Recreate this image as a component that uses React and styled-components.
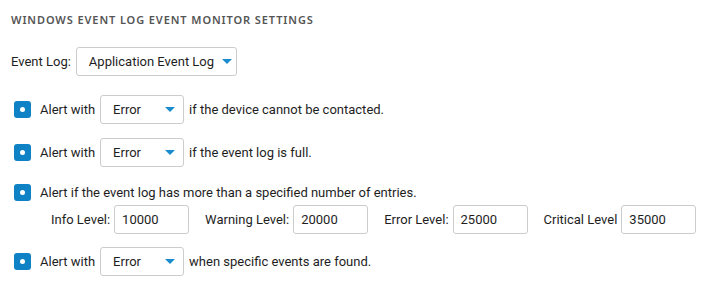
import React from "react";
import styled, { createGlobalStyle } from "styled-components";

const Global = createGlobalStyle`
  html, body { margin: 0; padding: 0; background: #fff; }
  body { font-family: Roboto, "Noto Sans", sans-serif; color: #1e1e1e; }
`;

const Page = styled.div`
  padding: 12px 11px 0 11px;
  font-size: 13px;
`;

const Heading = styled.h2`
  margin: 0;
  font-family: "Noto Sans", sans-serif;
  font-size: 11px;
  font-weight: 600;
  letter-spacing: 0.9px;
  color: #555;
  text-transform: uppercase;
  line-height: 16px;
`;

const Row = styled.div`
  display: flex;
  align-items: center;
  gap: ${(p) => p.$gap ?? 5}px;
  margin-top: ${(p) => p.$mt ?? 0}px;
  padding-left: ${(p) => p.$indent ?? 0}px;
`;

const Label = styled.span`
  white-space: nowrap;
`;

const Select = styled.div`
  box-sizing: border-box;
  display: flex;
  align-items: center;
  justify-content: space-between;
  width: ${(p) => p.$w}px;
  height: 29px;
  padding: 0 8px 0 12px;
  border: 1px solid #ccc;
  border-radius: 3px;
  background: #fff;
  white-space: nowrap;
  flex: none;
`;

const Caret = styled.span`
  width: 0;
  height: 0;
  border-left: 5px solid transparent;
  border-right: 5px solid transparent;
  border-top: 5px solid #1a8bcc;
  margin-left: 8px;
`;

const Check = styled.span`
  box-sizing: border-box;
  width: 17px;
  height: 17px;
  margin: 0 4px 0 3px;
  border-radius: 3px;
  background: #0f82c6;
  display: inline-flex;
  align-items: center;
  justify-content: center;
  flex: none;
  &::after {
    content: "";
    width: 5px;
    height: 5px;
    border-radius: 50%;
    background: #fff;
  }
`;

const Input = styled.div`
  box-sizing: border-box;
  width: 75px;
  height: 29px;
  border: 1px solid #ccc;
  border-radius: 3px;
  padding: 0 7px;
  display: flex;
  align-items: center;
  flex: none;
`;

const Level = styled.div`
  display: flex;
  align-items: center;
  gap: 4px;
`;

const Dropdown = ({ w, children }) => (
  <Select $w={w}>
    <span>{children}</span>
    <Caret />
  </Select>
);

export default function App() {
  return (
    <Page>
      <Global />
      <Heading>Windows Event Log Event Monitor Settings</Heading>
      <Row $mt={19} $gap={5}>
        <Label>Event Log:</Label>
        <Dropdown w={161}>Application Event Log</Dropdown>
      </Row>
      <Row $mt={19}>
        <Check />
        <Label>Alert with</Label>
        <Dropdown w={84}>Error</Dropdown>
        <Label>if the device cannot be contacted.</Label>
      </Row>
      <Row $mt={14}>
        <Check />
        <Label>Alert with</Label>
        <Dropdown w={84}>Error</Dropdown>
        <Label>if the event log is full.</Label>
      </Row>
      <Row $mt={17}>
        <Check />
        <Label>Alert if the event log has more than a specified number of entries.</Label>
      </Row>
      <Row $mt={4} $indent={40} $gap={16}>
        <Level><Label>Info Level:</Label><Input>10000</Input></Level>
        <Level><Label>Warning Level:</Label><Input>20000</Input></Level>
        <Level><Label>Error Level:</Label><Input>25000</Input></Level>
        <Level><Label>Critical Level</Label><Input>35000</Input></Level>
      </Row>
      <Row $mt={13}>
        <Check />
        <Label>Alert with</Label>
        <Dropdown w={84}>Error</Dropdown>
        <Label>when specific events are found.</Label>
      </Row>
    </Page>
  );
}
